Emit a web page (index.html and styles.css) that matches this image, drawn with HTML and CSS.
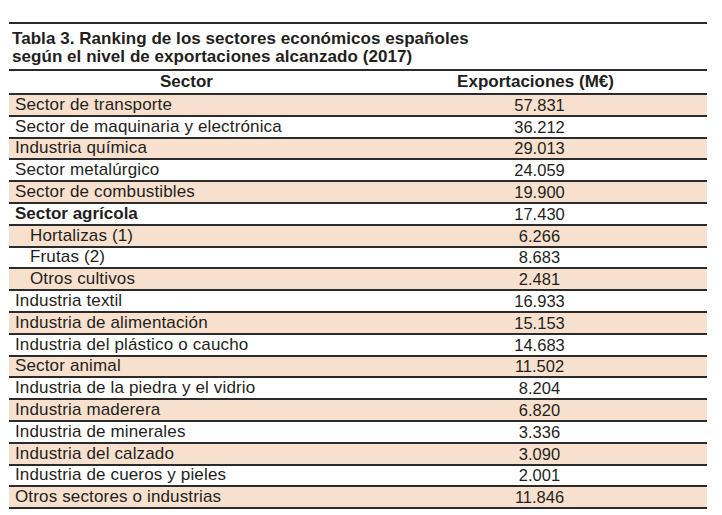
FILE: index.html
```html
<!DOCTYPE html>
<html lang="es">
<head>
<meta charset="utf-8">
<title>Tabla 3</title>
<link rel="stylesheet" href="styles.css">
</head>
<body>
<div class="box">
  <h1 class="title">Tabla 3. Ranking de los sectores económicos españoles<br>según el nivel de exportaciones alcanzado (2017)</h1>
  <table class="data">
    <thead>
      <tr><th class="c1">Sector</th><th class="c2">Exportaciones (M€)</th></tr>
    </thead>
    <tbody>
      <tr class="alt"><td class="c1">Sector de transporte</td><td class="c2">57.831</td></tr>
      <tr><td class="c1">Sector de maquinaria y electrónica</td><td class="c2">36.212</td></tr>
      <tr class="alt"><td class="c1">Industria química</td><td class="c2">29.013</td></tr>
      <tr><td class="c1">Sector metalúrgico</td><td class="c2">24.059</td></tr>
      <tr class="alt"><td class="c1">Sector de combustibles</td><td class="c2">19.900</td></tr>
      <tr><td class="c1 bold">Sector agrícola</td><td class="c2">17.430</td></tr>
      <tr class="alt"><td class="c1 sub">Hortalizas (1)</td><td class="c2">6.266</td></tr>
      <tr><td class="c1 sub">Frutas (2)</td><td class="c2">8.683</td></tr>
      <tr class="alt"><td class="c1 sub">Otros cultivos</td><td class="c2">2.481</td></tr>
      <tr><td class="c1">Industria textil</td><td class="c2">16.933</td></tr>
      <tr class="alt"><td class="c1">Industria de alimentación</td><td class="c2">15.153</td></tr>
      <tr><td class="c1">Industria del plástico o caucho</td><td class="c2">14.683</td></tr>
      <tr class="alt"><td class="c1">Sector animal</td><td class="c2">11.502</td></tr>
      <tr><td class="c1">Industria de la piedra y el vidrio</td><td class="c2">8.204</td></tr>
      <tr class="alt"><td class="c1">Industria maderera</td><td class="c2">6.820</td></tr>
      <tr><td class="c1">Industria de minerales</td><td class="c2">3.336</td></tr>
      <tr class="alt"><td class="c1">Industria del calzado</td><td class="c2">3.090</td></tr>
      <tr><td class="c1">Industria de cueros y pieles</td><td class="c2">2.001</td></tr>
      <tr class="alt"><td class="c1">Otros sectores o industrias</td><td class="c2">11.846</td></tr>
    </tbody>
  </table>
</div>
</body>
</html>
```

FILE: styles.css
```css
html, body {
  margin: 0;
  padding: 0;
  background: #ffffff;
}
body {
  font-family: "Liberation Sans", Arial, sans-serif;
  color: #231f20;
}
.box {
  width: 698px;
  margin: 22px 0 0 9px;
  border-top: 2px solid #2b2b2b;
}
.title {
  margin: 0;
  padding: 6px 0 3px 3px;
  font-size: 17px;
  font-weight: bold;
  line-height: 18px;
  letter-spacing: 0.05px;
  border-bottom: 2px solid #2b2b2b;
}
.data {
  width: 100%;
  border-collapse: collapse;
  font-size: 17px;
}
.data th,
.data td {
  padding: 0;
  border-bottom: 2px solid #2b2b2b;
}
.data th {
  height: 22px;
  font-weight: bold;
  text-align: center;
}
.data th.c1 {
  padding-right: 8px;
}
.data th.c2 {
  padding-right: 8px;
}
.data td {
  height: 19.8px;
  line-height: 18px;
}
.c1 {
  width: 342px;
}
td.c1 {
  text-align: left;
  padding-left: 6px;
  letter-spacing: 0.15px;
}
td.c2 {
  text-align: center;
  font-size: 16.5px;
}
.alt td {
  background: #f8e0ce;
}
td.bold {
  font-weight: bold;
  letter-spacing: 0;
}
td.sub {
  padding-left: 21px;
}
```
